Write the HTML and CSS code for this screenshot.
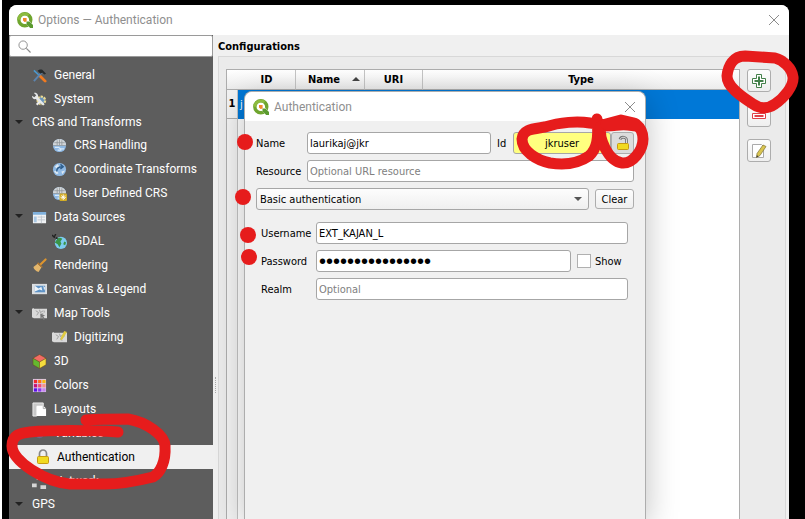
FILE: index.html
```html
<!DOCTYPE html>
<html lang="en">
<head>
<meta charset="utf-8">
<title>Options — Authentication</title>
<link rel="stylesheet" href="styles.css">
</head>
<body>
<svg class="defs" aria-hidden="true">
  <symbol id="qgis" viewBox="0 0 16 16">
    <circle cx="7.800" cy="7.800" r="6" fill="none" stroke="#6fa52e" stroke-width="3.400"/>
    <path d="M1.800 7.800a6 6 0 0 1 9.700-4.600" fill="none" stroke="#8dbb3f" stroke-width="2.800"/>
    <path d="M8 8h3.500l4.500 4.800v3h-3L8 11z" fill="#fff"/>
    <path d="M9.500 9.500h3l3.500 3.600v2.900h-2.800l-3.700-3.700z" fill="#5b9a2f"/>
    <path d="M6 6h3.600v3.600l-2 .4-1.600-1.600z" fill="#f08a2c"/>
  </symbol>
  <symbol id="close" viewBox="0 0 12 12"><path d="M1 1l10 10M11 1L1 11" stroke="#8c8c8c" fill="none"/></symbol>
  <symbol id="globe" viewBox="0 0 16 16">
    <circle cx="8" cy="8" r="7" fill="#8fb9e4"/>
    <path d="M1 8a7 7 0 0 1 14 0z" fill="#d3d6d8"/>
    <path d="M1 8h14M2.500 5h11M5.500 2.500v5M8 1.500v6M10.500 2.500v5" stroke="#8e9498" stroke-width=".8" fill="none"/>
    <path d="M3 10h4l2 1.500h4M6 13h4" stroke="#d8eafa" stroke-width="1.300" fill="none"/>
  </symbol>
  <symbol id="map" viewBox="0 0 16 16">
    <path d="M0 3l2-1v1h14v10H2l-2-1z" fill="#d9d9d9"/>
    <path d="M4 5l3 2-2 3M8 4l1 3 3-2M9 9l3-1M11 11l-2-1M13 5v2" stroke="#9d9d9d" fill="none"/>
  </symbol>
</svg>

<main class="window">
  <header class="titlebar">
    <svg class="logo"><use href="#qgis"/></svg>
    <h1>Options — Authentication</h1>
    <button class="close" aria-label="Close options"><svg><use href="#close"/></svg></button>
  </header>

  <div class="body">
    <aside class="sidebar">
      <label class="search">
        <svg viewBox="0 0 14 14"><circle cx="5.500" cy="5.500" r="4.500" fill="none" stroke="#8a8a8a"/><path d="M9 9l4.500 4.500" stroke="#8a8a8a" stroke-width="1.300"/></svg>
        <input type="search" aria-label="Search options">
      </label>
      <nav>
        <a href="#"><svg viewBox="0 0 16 16"><path d="M2 2.500L9 9" stroke="#4a9ad2" stroke-width="1.600"/><path d="M8.500 8.500l5.500 5.500" stroke="#f07a20" stroke-width="3" stroke-linecap="round"/><path d="M2 14l9-10" stroke="#5c84ae" stroke-width="2"/><path d="M6 3c2-2 5-2 6 0l3 3-2 1-2-2-2 1z" fill="#262b2d"/></svg>General</a>
        <a href="#"><svg viewBox="0 0 16 16"><circle cx="10" cy="9" r="4" fill="#6894bd" stroke="#ead991" stroke-width="2.400" stroke-dasharray="2.500 1"/><path d="M2 1l2.500 2.500-2 2L0 4c0 3 2 4 4 3.500l8 7 1.500-1.500-7-7.500C7 3 5 0 2 1z" fill="#e6e8ea"/><path d="M5 13.500l3-3" stroke="#eee" stroke-width="2.200"/></svg>System</a>
        <a href="#" class="plain open">CRS and Transforms</a>
        <a href="#" class="child"><svg><use href="#globe"/></svg>CRS Handling</a>
        <a href="#" class="child"><svg viewBox="0 0 16 16"><circle cx="8" cy="8" r="7" fill="#8fb9e4"/><path d="M3 5l3-3 2 3-3 2zM2 10l3-1 2 3-2 1zM10 10l4-1-3 4z" fill="#dce8f2"/><path d="M5 10c0-4 3-5 6-5M9 2.500l3 2.500-3 2.500" stroke="#2f5f8e" stroke-width="1.500" fill="none"/></svg>Coordinate Transforms</a>
        <a href="#" class="child"><svg viewBox="0 0 16 16"><use href="#globe"/><rect x="8" y="8" width="8" height="8" rx="1" fill="#d2ac24"/><path d="M12 9v6M9 12h6M10 10l4 4M14 10l-4 4" stroke="#fff" stroke-width=".9"/></svg>User Defined CRS</a>
        <a href="#" class="open"><svg viewBox="0 0 16 16"><path d="M1 2h14v12H1z" fill="#f0f2f4"/><path d="M1 2h14v3H1z" fill="#7fb0dc"/><path d="M2 7h3v6H2z" fill="#a9c8e4"/><path d="M6 7.500h8M6 10.500h8M10 6v8" stroke="#c0c8cf"/></svg>Data Sources</a>
        <a href="#" class="child"><svg viewBox="0 0 16 16"><circle cx="9.500" cy="9.500" r="6.500" fill="#7cccf0"/><path d="M5 6c2-3 4-2 6-1l-2 3 1 2-2 4-2-3-3-2zM13 8l2 1-1 3-2-1z" fill="#3a9448"/><path d="M0 1l3 3M4 0L2 4M4 4l2 1" stroke="#222" stroke-width="1.500"/></svg>GDAL</a>
        <a href="#"><svg viewBox="0 0 16 16"><path d="M14.500 1.500L9 7" stroke="#dd952f" stroke-width="2.200" stroke-linecap="round"/><path d="M6 6l4 4-3 5C4 14 2 12 1.500 9.500z" fill="#e3b66c"/><path d="M6 5l5 5" stroke="#b4772b" stroke-width="1.500"/></svg>Rendering</a>
        <a href="#"><svg viewBox="0 0 16 16"><path d="M0 2h16v11H0z" fill="#dcdfe2"/><path d="M3 4h11v7H3z" fill="#5f93c6"/><path d="M3 4l4 3 3-2 1 4-3-1-5 2zM12 4l2 2-1 3z" fill="#edf3f8"/></svg>Canvas &amp; Legend</a>
        <a href="#" class="open"><svg viewBox="0 0 16 16"><use href="#map"/><path d="M9 8l5 2-2 1 2 3-2 1-1-3-2 1z" fill="#777"/></svg>Map Tools</a>
        <a href="#" class="child"><svg viewBox="0 0 16 16"><use href="#map"/><path d="M13 1l3 1-5 8-2 1 .5-3z" fill="#dfca3f"/></svg>Digitizing</a>
        <a href="#"><svg viewBox="0 0 16 16"><path d="M8 .5l7 4-7 4-7-4z" fill="#f26c63"/><path d="M1 4.500l7 4v7l-7-4z" fill="#64b82e"/><path d="M15 4.500l-7 4v7l7-4z" fill="#f5dd3d"/><path d="M8 .5l7 4v7l-7 4-7-4v-7zM1 4.500l7 4 7-4M8 8.500v7" fill="none" stroke="#6a4a20" stroke-width=".6"/></svg>3D</a>
        <a href="#"><svg viewBox="0 0 16 16"><path d="M1 1h14v14H1z" fill="#dcc9e8"/><path d="M2 2h3.500v3.500H2z" fill="#f02a2a"/><path d="M6.500 2H10v3.500H6.500z" fill="#fb7415"/><path d="M11 2h3.500v3.500H11z" fill="#f8b90f"/><path d="M2 6.500h3.500V10H2z" fill="#c61274"/><path d="M6.500 6.500H10V10H6.500z" fill="#f24a72"/><path d="M11 6.500h3.500V10H11z" fill="#f79283"/><path d="M2 11h3.500v3.500H2z" fill="#5a10e8"/><path d="M6.500 11H10v3.500H6.500z" fill="#8b32ee"/><path d="M11 11h3.500v3.500H11z" fill="#c583f0"/></svg>Colors</a>
        <a href="#"><svg viewBox="0 0 16 16"><path d="M1 1h11v4H5v10H1z" fill="#c8c8c8" stroke="#eee"/><path d="M5 4h7l3 3v8H5z" fill="#fff"/><path d="M12 4v3h3" stroke="#aaa" fill="none"/></svg>Layouts</a>
        <a href="#"><svg viewBox="0 0 16 16"><circle cx="8" cy="8" r="5" fill="#6d6489"/></svg>Variables</a>
        <a href="#" class="selected" aria-current="page"><svg viewBox="0 0 14 16"><path d="M3.500 8V4.500a3.500 3.500 0 0 1 7 0V8" fill="none" stroke="#888" stroke-width="1.700"/><rect x="1.500" y="7.500" width="11" height="7" rx="1" fill="#f1da20" stroke="#c79b13"/></svg>Authentication</a>
        <a href="#"><svg viewBox="0 0 16 16"><path d="M0 10h5v4H0zM9 12h6v4H9zM5 2h6v4H5z" fill="#d5d5d5"/></svg>Network</a>
        <a href="#" class="plain open">GPS</a>
        <a href="#" class="child" aria-label="GPSBabel"><svg viewBox="0 0 16 16"><circle cx="8" cy="8" r="7" fill="#4a86c4"/></svg></a>
      </nav>
    </aside>
    <div class="splitter"></div>

    <section class="content">
      <h2>Configurations</h2>
      <div class="group">
        <div class="table-frame">
          <table>
            <colgroup><col class="c-num"><col class="c-id"><col class="c-name"><col class="c-uri"><col></colgroup>
            <thead><tr><th></th><th>ID</th><th class="sorted">Name</th><th>URI</th><th>Type</th></tr></thead>
            <tbody>
              <tr class="current"><th>1</th><td>j</td><td></td><td></td><td></td></tr>
              <tr class="filler"><th></th><td colspan="4"></td></tr>
            </tbody>
          </table>
        </div>
        <div class="tools">
          <button aria-label="Add configuration"><svg viewBox="0 0 16 16"><path d="M5.500 1.500h5v4h4v5h-4v4h-5v-4h-4v-5h4z" fill="#fff" stroke="#43804a"/><path d="M8 3.500v9M3.500 8h9" stroke="#43804a" stroke-width="2"/></svg></button>
          <button aria-label="Remove configuration"><svg viewBox="0 0 16 16"><path d="M1.500 5.500h13v5h-13z" fill="#fff" stroke="#e04048"/><path d="M3.500 8h9" stroke="#e04048" stroke-width="2"/></svg></button>
          <button aria-label="Edit configuration"><svg viewBox="0 0 16 16"><path d="M1.500 1.500h9l2 2v11h-11z" fill="#fff" stroke="#aaa"/><path d="M12 2l3 1.500-6 9-3.500 2 .5-4z" fill="#dac550" stroke="#807335" stroke-width=".7"/><path d="M5.500 14.500l.3-2.300 1.700 1z" fill="#333"/></svg></button>
        </div>
      </div>
    </section>
  </div>
</main>

<div class="dialog" role="dialog" aria-labelledby="dlg-title">
  <header class="titlebar">
    <svg class="logo"><use href="#qgis"/></svg>
    <h1 id="dlg-title">Authentication</h1>
    <button class="close" aria-label="Close dialog"><svg><use href="#close"/></svg></button>
  </header>
  <form>
    <div class="row">
      <label class="wide" for="name">Name</label>
      <input id="name" type="text" class="name" value="laurikaj@jkr">
      <label class="id-label" for="cfg-id">Id</label>
      <input id="cfg-id" type="text" class="cfg-id" value="jkruser">
      <button type="button" class="lock" aria-label="Unlock id"><svg viewBox="0 0 14 16"><path d="M4 4.500C5 1 11 2 10.500 5v3" fill="none" stroke="#777" stroke-width="2.800"/><path d="M4 4.500C5 1 11 2 10.500 5v3" fill="none" stroke="#ddd"/><rect x="1.500" y="8.500" width="11" height="6" rx="1" fill="#f1da20" stroke="#c79b13"/></svg></button>
    </div>
    <div class="row">
      <label class="wide" for="resource">Resource</label>
      <input id="resource" type="text" placeholder="Optional URL resource">
    </div>
    <div class="row method">
      <span class="combo"><select aria-label="Authentication method"><option>Basic authentication</option></select></span>
      <button type="button" class="clear">Clear</button>
    </div>
    <div class="credentials">
      <div class="row">
        <label for="user">Username</label>
        <input id="user" type="text" value="EXT_KAJAN_L">
      </div>
      <div class="row">
        <label for="pass">Password</label>
        <input id="pass" type="password" value="abcdefghijklmnop">
        <span class="show"><input id="show" type="checkbox"><label for="show">Show</label></span>
      </div>
      <div class="row">
        <label for="realm">Realm</label>
        <input id="realm" type="text" placeholder="Optional">
      </div>
    </div>
  </form>
</div>

<svg class="markup" width="805" height="519" viewBox="0 0 805 519" aria-hidden="true">
  <g class="pen">
    <path d="M745 56C733 56 728 66 727 76C727 88 744 98 753 104C760 109 768 109 775 104C784 98 794 86 793 77C792 68 783 60 775 58Z"/>
    <path d="M597 119C599 138 597 149 589 156C576 165 562 165 550 163C536 160 522 151 522 139C523 129 533 129 545 127C560 122 578 121 590 123L606 125"/>
    <path d="M601 126C598 138 608 161 622 163C633 164 643 150 643 139C643 132 641 128 636 124C628 124 615 126 603 126"/>
    <path d="M606 124L621 120L634 123L636 126L620 124Z"/>
    <path d="M86 420C100 419 114 419 128 419C146 422 165 435 165 446C166 462 160 473 153 477C137 481 118 484 105 484L70 484C45 482 12 461 12 446C12 435 20 433 30 432C50 430 90 430 118 432"/>
  </g>
  <g class="dots">
    <circle cx="245" cy="142" r="8"/><circle cx="243" cy="197" r="8"/><circle cx="248" cy="235" r="8"/><circle cx="249" cy="257" r="8"/>
  </g>
</svg>
</body>
</html>
```
FILE: styles.css
```css
* { box-sizing: border-box; }

body {
  margin: 0;
  height: 100vh;
  overflow: hidden;
  display: flex;
  background: #000;
  border-left: 2px solid #fff;
  padding: 5px 16px 0 7px;
  font: 11px/14px "DejaVu Sans Condensed", "DejaVu Sans", sans-serif;
  color: #000;
}

h1, h2 { margin: 0; }
button, input, select { font: inherit; color: inherit; margin: 0; }
svg { display: block; flex: none; }
.defs { position: absolute; width: 0; height: 0; }

/* windows */
.window {
  flex: 1;
  display: flex;
  flex-direction: column;
  min-width: 0;
  background: #f0f0f0;
  border-radius: 8px 8px 0 0;
  overflow: hidden;
}
.titlebar {
  display: flex;
  align-items: center;
  gap: 5px;
  height: 30px;
  padding: 0 9px 0 8px;
  background: #fff;
  flex: none;
}
.titlebar h1 {
  flex: 1;
  font: 12px/16px Roboto, "Noto Sans", sans-serif;
  color: #8f8f8f;
}
.logo { width: 16px; height: 16px; }
.close { border: 0; padding: 0; background: none; }
.close svg { width: 12px; height: 12px; }
.body { flex: 1; display: flex; min-height: 0; }

/* sidebar */
.sidebar {
  width: 204px;
  flex: none;
  background: #5d5d5d;
  overflow: hidden;
  font: 12px/16px Roboto, "Noto Sans", sans-serif;
}
.search {
  display: flex;
  align-items: center;
  gap: 4px;
  height: 22px;
  padding-left: 8px;
  background: #fff;
  border: 1px solid #9a9a9a;
  border-radius: 2px;
}
.search svg { width: 13px; height: 13px; }
.search input { flex: 1; min-width: 0; border: 0; outline: 0; background: none; }
nav { display: flex; flex-direction: column; padding-top: 6px; }
nav a {
  position: relative;
  flex: none;
  display: flex;
  align-items: center;
  gap: 7px;
  height: 24px;
  padding-left: 23px;
  color: #fff;
  text-decoration: none;
  white-space: nowrap;
}
nav a svg { width: 15px; height: 15px; }
nav .plain { height: 22px; }
nav .child { padding-left: 43px; }
nav .selected { padding-left: 27px; background: #f0f0f0; color: #000; }
nav .selected svg { width: 14px; height: 16px; }
nav .open::before {
  content: "";
  position: absolute;
  left: 6px;
  top: 9px;
  border: 4px solid transparent;
  border-top-color: #222;
  border-bottom: 0;
}
.splitter {
  width: 5px;
  flex: none;
  display: flex;
  justify-content: center;
  align-items: center;
  padding-top: 216px;
}
.splitter::before { content: ""; height: 16px; border-left: 1px dotted #aaa; }

/* content */
.content { flex: 1; min-width: 0; display: flex; flex-direction: column; padding-right: 3px; }
h2 { padding-top: 3px; font-size: 11px; line-height: 18px; }
.group {
  flex: 1;
  min-height: 0;
  display: flex;
  gap: 7px;
  padding: 12px 14px 0 7px;
  background: #ebebeb;
  border: 1px solid #d8d8d8;
  border-bottom: 0;
}
.table-frame { flex: 1; min-width: 0; border: 1px solid #adadad; border-bottom: 0; background: #fff; }
table { width: 100%; height: 100%; table-layout: fixed; border-collapse: separate; border-spacing: 0; }
.c-num { width: 11px; }
.c-id { width: 58px; }
.c-name { width: 69px; }
.c-uri { width: 58px; }
th, td { padding: 0; }
thead th {
  position: relative;
  height: 20px;
  padding-top: 1px;
  background: linear-gradient(#fff, #ececec);
  border-right: 1px solid #c4c4c4;
  border-bottom: 1px solid #adadad;
}
thead th:first-child, thead th:last-child { border-right: 0; }
thead .sorted { padding-right: 12px; }
.sorted::after {
  content: "";
  position: absolute;
  right: 4px;
  top: 7px;
  border: 4px solid transparent;
  border-bottom-color: #444;
  border-top: 0;
}
tbody th { background: #f3f3f3; border-right: 1px solid #c4c4c4; }
.current th { height: 29px; border-bottom: 1px solid #adadad; }
.current td { padding-left: 2px; background: #0078d7; color: #fff; }
.filler { height: 100%; }
.tools { display: flex; flex-direction: column; gap: 12px; }
.tools button, .lock, .clear {
  display: flex;
  align-items: center;
  justify-content: center;
  padding: 0;
  border: 1px solid #adadad;
  border-radius: 3px;
  background: linear-gradient(#fdfdfd, #efefef);
}
.tools button { width: 24px; height: 23px; }
.tools svg { width: 16px; height: 16px; }

/* credentials dialog floating above the options window */
.dialog {
  position: absolute;
  left: 244px;
  top: 91px;
  bottom: 0;
  width: 402px;
  background: #f0f0f0;
  border: 1px solid #adadad;
  border-bottom: 0;
  border-radius: 8px 8px 0 0;
  overflow: hidden;
  box-shadow: 0 8px 32px rgba(0, 0, 0, .25);
}
.dialog .titlebar { height: 29px; }
form { display: flex; flex-direction: column; gap: 6px; padding: 11px 11px 0; }
.row { display: flex; align-items: center; height: 22px; }
.row label { width: 55px; padding-top: 2px; }
.row .wide { width: 51px; }
.row input { flex: 1; min-width: 0; }
.row input:not([type="checkbox"]) {
  height: 22px;
  padding: 1px 2px 0;
  border: 1px solid #a6a6a6;
  border-radius: 3px;
  background: #fff;
}
.row input::placeholder { color: #808080; }
.row .id-label { width: 16px; margin-left: 6px; }
.row input.name { flex: 186; }
.row input.cfg-id { flex: 96; background: #ffff7f; text-align: center; }
.lock { width: 23px; height: 22px; background: #dcdcdc; }
.lock svg { width: 14px; height: 16px; }
.method { gap: 6px; }
.combo { position: relative; flex: 1; }
.combo select {
  appearance: none;
  display: block;
  width: 100%;
  height: 22px;
  padding: 2px 3px 0;
  border: 1px solid #a6a6a6;
  border-radius: 3px;
  background: linear-gradient(#fdfdfd, #efefef);
}
.combo::after {
  content: "";
  position: absolute;
  right: 7px;
  top: 9px;
  border: 4px solid transparent;
  border-top-color: #555;
  border-bottom: 0;
}
.clear { width: 39px; height: 20px; padding-top: 1px; }
.credentials { display: flex; flex-direction: column; gap: 6px; padding: 6px 6px 0 5px; }
.row input[type="password"] { font: 20px/20px "Liberation Sans", sans-serif; }
.show { display: flex; align-items: center; gap: 4px; margin-left: 6px; }
.show label { width: 33px; }
.show input {
  appearance: none;
  flex: none;
  width: 14px;
  height: 14px;
  border: 1px solid #b0b0b0;
  background: #fff;
}

/* red pen annotations */
.markup { position: absolute; left: 0; top: 0; pointer-events: none; }
.pen { fill: none; stroke: #e61c1c; stroke-width: 11px; stroke-linecap: round; stroke-linejoin: round; }
.dots { fill: #e61c1c; }
```
